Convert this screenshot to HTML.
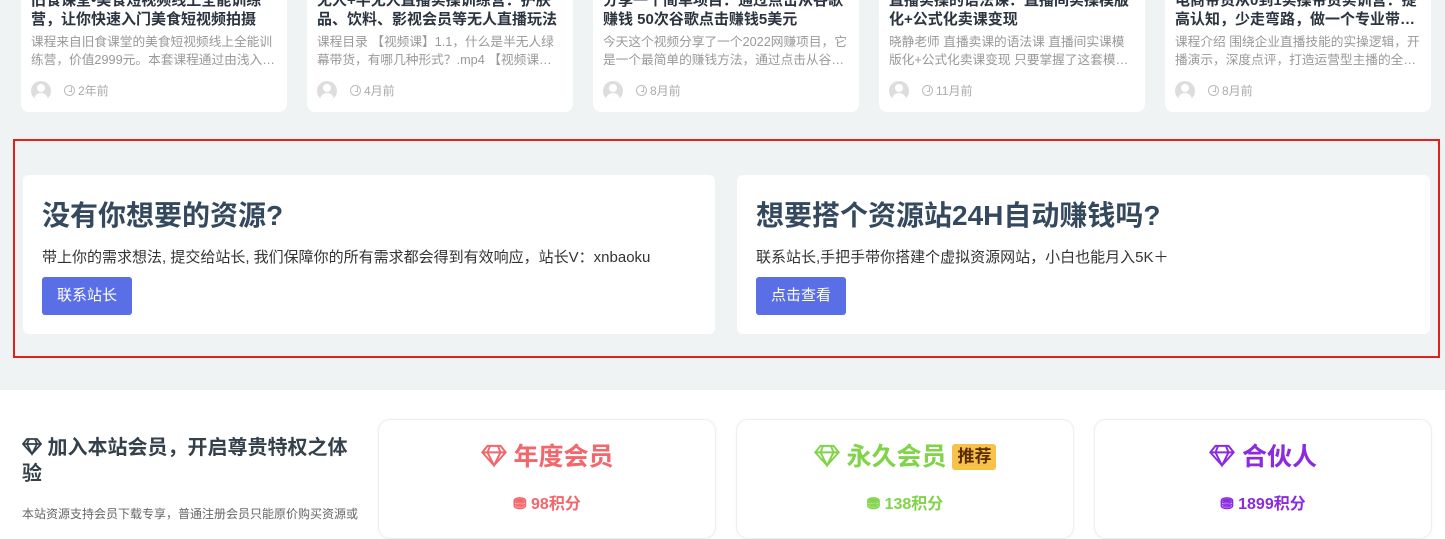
<!DOCTYPE html>
<html><head><meta charset="utf-8"><style>
*{margin:0;padding:0;box-sizing:border-box}
body{width:1445px;height:524px;overflow:hidden;background:#fff;font-family:"Liberation Sans","Noto Sans CJK SC",sans-serif;position:relative}
.gray{position:absolute;left:0;top:0;width:1445px;height:390px;background:#f0f3f4}
.pc{position:absolute;top:-20px;width:266px;height:132px;background:#fff;border-radius:8px;overflow:hidden}
.pc .t{position:absolute;left:10px;top:11px;width:246px;font-size:15px;font-weight:bold;color:#2b3440;line-height:19px}
.pc .e{position:absolute;left:10px;top:53px;width:246px;font-size:12.7px;color:#999;line-height:18px;height:36px;overflow:hidden;display:-webkit-box;-webkit-line-clamp:2;-webkit-box-orient:vertical}
.pc .av{position:absolute;left:10px;top:101px;width:20px;height:20px;border-radius:50%;background:#ddd;overflow:hidden}
.pc .av:before{content:"";position:absolute;left:6px;top:3px;width:8px;height:8px;border-radius:50%;background:#fff}
.pc .av:after{content:"";position:absolute;left:3px;top:12px;width:14px;height:10px;border-radius:7px 7px 0 0;background:#fff}
.pc .tm{position:absolute;left:43px;top:103px;font-size:12px;color:#aaa;line-height:16px}
.clk{display:inline-block;width:11px;height:11px;border:1.3px solid #bbb;border-radius:50%;vertical-align:-1px;margin-right:3px;position:relative}
.clk:after{content:"";position:absolute;left:3.5px;top:1px;width:2px;height:4px;border-right:1.2px solid #bbb;border-bottom:1.2px solid #bbb}
.red{position:absolute;left:13px;top:139px;width:1427px;height:219px;border:2px solid #e3201b}
.bc{position:absolute;top:175px;width:692px;height:159px;background:#fff;border-radius:6px}
.bc h2{position:absolute;left:19px;top:19px;font-size:28px;color:#34495e;font-weight:bold;white-space:nowrap}
.bc p{position:absolute;left:19px;top:71px;font-size:15px;color:#333;white-space:nowrap}
.bc a{position:absolute;left:19px;top:102px;width:90px;height:38px;background:#5a6fe6;color:#fff;border-radius:3px;font-size:15px;text-align:center;line-height:38px}
.lt{position:absolute;left:22px;top:435px;width:340px;font-size:20px;font-weight:bold;color:#34404c;line-height:26px}
.ld{position:absolute;left:22px;top:505px;font-size:12px;color:#666;white-space:nowrap}
.mc{position:absolute;top:419px;width:338px;height:120px;border:1px solid #eee;border-radius:12px;background:#fff;box-shadow:0 0 4px rgba(0,0,0,.04)}
.mc .n{position:absolute;left:0;right:0;top:22px;text-align:center;font-size:25px;font-weight:bold;line-height:30px}
.mc .p{position:absolute;left:0;right:0;top:70px;text-align:center;font-size:16px;font-weight:bold}
.tag{display:inline-block;background:#f6c24a;color:#5a2a00;font-size:17px;padding:0 5px;border-radius:3px;line-height:26px;vertical-align:3px;margin-left:6px}
</style></head><body>
<div class="gray"></div>
<div class="pc" style="left:21px"><div class="t">旧食课堂•美食短视频线上全能训练营，让你快速入门美食短视频拍摄</div><div class="e">课程来自旧食课堂的美食短视频线上全能训练营，价值2999元。本套课程通过由浅入深的方式讲解</div><div class="av"></div><div class="tm"><span class="clk"></span>2年前</div></div>
<div class="pc" style="left:307px"><div class="t">无人+半无人直播实操训练营：护肤品、饮料、影视会员等无人直播玩法</div><div class="e">课程目录 【视频课】1.1，什么是半无人绿幕带货，有哪几种形式？.mp4 【视频课】1.2</div><div class="av"></div><div class="tm"><span class="clk"></span>4月前</div></div>
<div class="pc" style="left:593px"><div class="t">分享一个简单项目：通过点击从谷歌赚钱 50次谷歌点击赚钱5美元</div><div class="e">今天这个视频分享了一个2022网赚项目，它是一个最简单的赚钱方法，通过点击从谷歌赚钱</div><div class="av"></div><div class="tm"><span class="clk"></span>8月前</div></div>
<div class="pc" style="left:879px"><div class="t">直播实操的语法课：直播间实操模版化+公式化卖课变现</div><div class="e">晓静老师 直播卖课的语法课 直播间实课模版化+公式化卖课变现 只要掌握了这套模版 就能</div><div class="av"></div><div class="tm"><span class="clk"></span>11月前</div></div>
<div class="pc" style="left:1165px"><div class="t">电商带货从0到1实操带货实训营：提高认知，少走弯路，做一个专业带…</div><div class="e">课程介绍 围绕企业直播技能的实操逻辑，开播演示，深度点评，打造运营型主播的全套方法</div><div class="av"></div><div class="tm"><span class="clk"></span>8月前</div></div>
<div class="red"></div>
<div class="bc" style="left:23px"><h2>没有你想要的资源?</h2><p>带上你的需求想法, 提交给站长, 我们保障你的所有需求都会得到有效响应，站长V：xnbaoku</p><a>联系站长</a></div>
<div class="bc" style="left:737px;width:693px"><h2>想要搭个资源站24H自动赚钱吗?</h2><p>联系站长,手把手带你搭建个虚拟资源网站，小白也能月入5K＋</p><a>点击查看</a></div>
<div class="lt"><svg width="20" height="20" viewBox="0 0 20 20" style="vertical-align:-2px"><path d="M5 3h10l4 5-9 10L1 8z M1 8h18 M7 3l-2 5 5 10 5-10-2-5" fill="none" stroke="#34404c" stroke-width="1.8"/></svg> 加入本站会员，开启尊贵特权之体验</div>
<div class="ld">本站资源支持会员下载专享，普通注册会员只能原价购买资源或</div>
<div class="mc" style="left:378px"><div class="n" style="color:#f2666c"><svg width="26" height="26" viewBox="0 0 20 20" style="vertical-align:-3px"><path d="M5 3h10l4 5-9 10L1 8z M1 8h18 M7 3l-2 5 5 10 5-10-2-5" fill="none" stroke="#f2666c" stroke-width="1.5"/></svg> 年度会员</div><div class="p" style="color:#f2666c">⛃ 98积分</div></div>
<div class="mc" style="left:736px"><div class="n" style="color:#80d44a"><svg width="26" height="26" viewBox="0 0 20 20" style="vertical-align:-3px"><path d="M5 3h10l4 5-9 10L1 8z M1 8h18 M7 3l-2 5 5 10 5-10-2-5" fill="none" stroke="#80d44a" stroke-width="1.5"/></svg> 永久会员<span class="tag">推荐</span></div><div class="p" style="color:#80d44a">⛃ 138积分</div></div>
<div class="mc" style="left:1094px"><div class="n" style="color:#8a2be2"><svg width="26" height="26" viewBox="0 0 20 20" style="vertical-align:-3px"><path d="M5 3h10l4 5-9 10L1 8z M1 8h18 M7 3l-2 5 5 10 5-10-2-5" fill="none" stroke="#8a2be2" stroke-width="1.5"/></svg> 合伙人</div><div class="p" style="color:#8a2be2">⛃ 1899积分</div></div>
</body></html>
